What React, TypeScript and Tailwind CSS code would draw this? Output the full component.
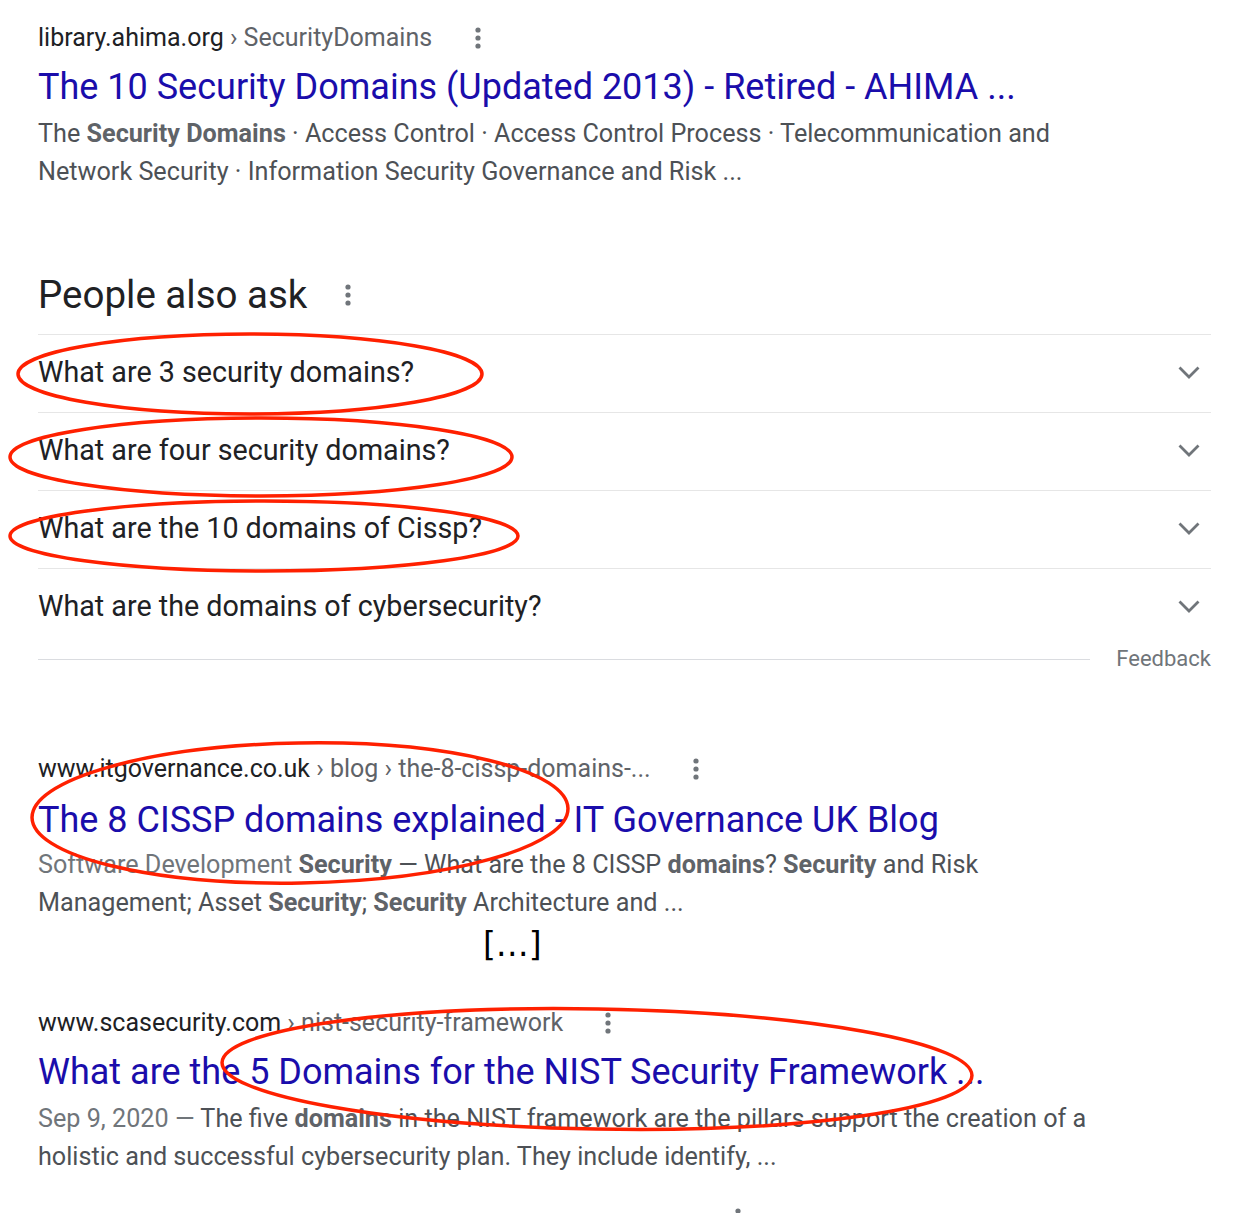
import React from "react";

function Dots({ className = "" }: { className?: string }) {
  return (
    <svg width="6" height="22" viewBox="0 0 6 22" className={className}>
      <circle cx="3" cy="3" r="2.6" fill="#70757a" />
      <circle cx="3" cy="11" r="2.6" fill="#70757a" />
      <circle cx="3" cy="19" r="2.6" fill="#70757a" />
    </svg>
  );
}

function Chevron() {
  return (
    <svg width="22" height="13" viewBox="0 0 22 13" className="mr-[11px]">
      <path d="M1.5 1.5l9.5 9.5 9.5-9.5" fill="none" stroke="#70757a" strokeWidth="2.8" />
    </svg>
  );
}

function UrlLine({ domain, path, dotsGap }: { domain: string; path: string; dotsGap: string }) {
  return (
    <div className="flex items-center h-[28px] text-[25px] leading-[28px]">
      <span className="text-[#202124]">{domain}</span>
      <span className="text-[#5f6368]">&nbsp;› {path}</span>
      <Dots className={dotsGap} />
    </div>
  );
}

const questions = [
  "What are 3 security domains?",
  "What are four security domains?",
  "What are the 10 domains of Cissp?",
  "What are the domains of cybersecurity?",
];

export default function App() {
  return (
    <div className="relative w-[1248px] h-[1213px] overflow-hidden bg-white font-['Roboto',sans-serif] pl-[38px] pr-[37px] pt-[24px]">
      {/* result 1 */}
      <UrlLine domain="library.ahima.org" path="SecurityDomains" dotsGap="ml-[43px]" />
      <div className="mt-[13px] text-[36px] leading-[44px] text-[#1a0dab] whitespace-nowrap">
        The 10 Security Domains (Updated 2013) - Retired - AHIMA ...
      </div>
      <p className="mt-[6px] text-[25.2px] leading-[38px] text-[#4d5156] whitespace-nowrap">
        The <b className="font-bold text-[#5f6368]">Security Domains</b> · Access Control · Access Control Process · Telecommunication and
        <br />
        Network Security · Information Security Governance and Risk ...
      </p>

      {/* people also ask */}
      <div className="mt-[80px] flex items-center h-[48px]">
        <span className="text-[38.5px] leading-[48px] text-[#202124]">People also ask</span>
        <Dots className="ml-[38px]" />
      </div>
      <div className="mt-[15px]">
        {questions.map((q) => (
          <div key={q} className="flex items-center justify-between h-[78px] border-t border-[#e6e6e6] pb-[2px]">
            <span className="text-[28.7px] text-[#202124]">{q}</span>
            <Chevron />
          </div>
        ))}
        <div className="flex items-center h-[24px]">
          <div className="flex-1 h-px bg-[#dadce0] mt-[2px]" />
          <span className="ml-[26px] text-[22px] text-[#70757a]">Feedback</span>
        </div>
      </div>

      {/* result 2 */}
      <div className="mt-[85px]">
        <UrlLine domain="www.itgovernance.co.uk" path="blog › the-8-cissp-domains-..." dotsGap="ml-[42px]" />
        <div className="mt-[15px] text-[36px] leading-[44px] text-[#1a0dab] whitespace-nowrap">
          The 8 CISSP domains explained - IT Governance UK Blog
        </div>
        <p className="mt-[4px] text-[25.2px] leading-[38px] text-[#4d5156] whitespace-nowrap">
          <span className="text-[#70757a]">Software Development </span>
          <b className="font-bold text-[#5f6368]">Security</b> — What are the 8 CISSP{" "}
          <b className="font-bold text-[#5f6368]">domains</b>? <b className="font-bold text-[#5f6368]">Security</b> and Risk
          <br />
          Management; Asset <b className="font-bold text-[#5f6368]">Security</b>;{" "}
          <b className="font-bold text-[#5f6368]">Security</b> Architecture and ...
        </p>
        <div className="ml-[445px] mt-[1px] font-['DejaVu_Sans',sans-serif] text-[33px] leading-[44px] text-black">
          […]
        </div>
      </div>

      {/* result 3 */}
      <div className="mt-[42px]">
        <UrlLine domain="www.scasecurity.com" path="nist-security-framework" dotsGap="ml-[42px]" />
        <div className="mt-[13px] text-[36px] leading-[44px] text-[#1a0dab] whitespace-nowrap">
          What are the 5 Domains for the NIST Security Framework ...
        </div>
        <p className="mt-[6px] text-[25.2px] leading-[38px] text-[#4d5156] whitespace-nowrap">
          <span className="text-[#70757a]">Sep 9, 2020 — </span>The five{" "}
          <b className="font-bold text-[#5f6368]">domains</b> in the NIST framework are the pillars support the creation of a
          <br />
          holistic and successful cybersecurity plan. They include identify, ...
        </p>
      </div>

      {/* next result, cut off */}
      <div className="mt-[32px] flex items-center">
        <span className="w-[697px]" />
        <Dots />
      </div>

      {/* red annotations */}
      <svg
        width="1248"
        height="1213"
        viewBox="0 0 1248 1213"
        className="absolute left-0 top-0 pointer-events-none"
        fill="none"
        stroke="#ff2000"
        strokeWidth="3.5"
      >
        <ellipse cx="250" cy="374" rx="232" ry="40" />
        <ellipse cx="261" cy="457" rx="251" ry="39" />
        <ellipse cx="264" cy="536" rx="254" ry="35" />
        <ellipse cx="300" cy="813" rx="268" ry="70" transform="rotate(-1 300 813)" />
        <ellipse cx="597" cy="1069" rx="375" ry="60" transform="rotate(1 597 1069)" />
      </svg>
    </div>
  );
}
